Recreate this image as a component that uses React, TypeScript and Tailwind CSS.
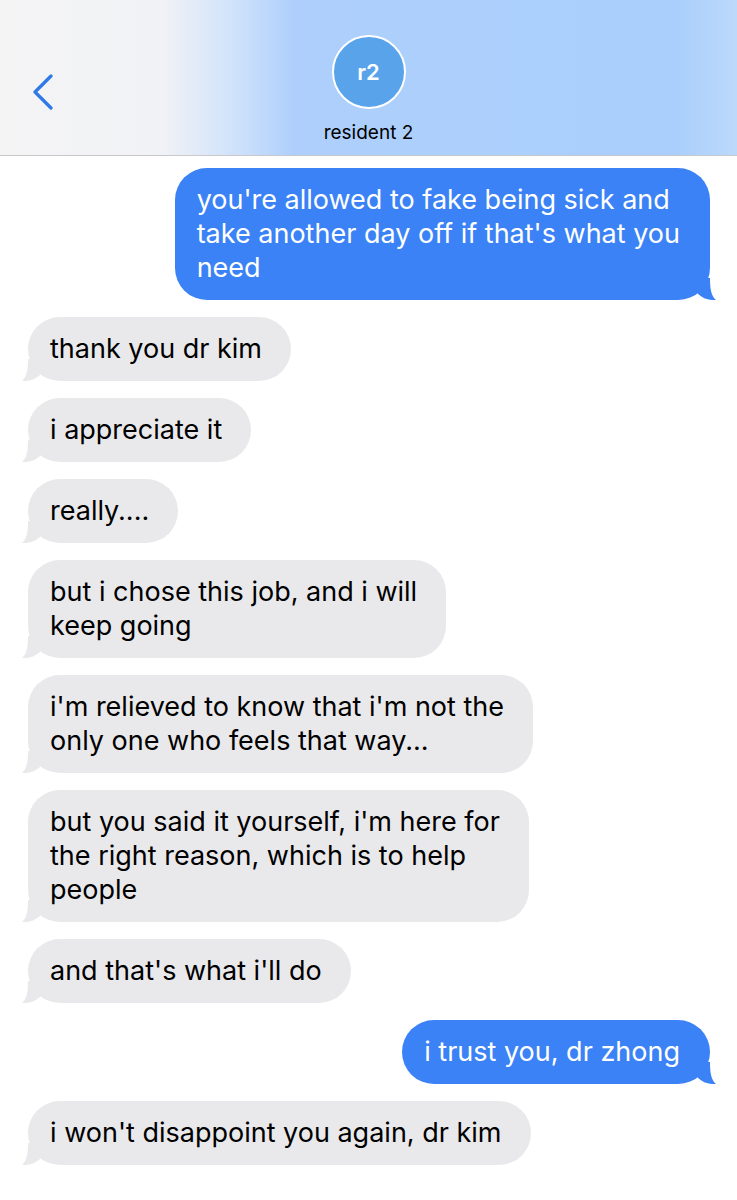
import { ReactNode } from 'react';

type Msg = { from: 'me' | 'them'; lines: string[] };

const messages: Msg[] = [
  { from: 'me', lines: ["you're allowed to fake being sick and", "take another day off if that's what you", 'need'] },
  { from: 'them', lines: ['thank you dr kim'] },
  { from: 'them', lines: ['i appreciate it'] },
  { from: 'them', lines: ['really....'] },
  { from: 'them', lines: ['but i chose this job, and i will', 'keep going'] },
  { from: 'them', lines: ["i'm relieved to know that i'm not the", 'only one who feels that way...'] },
  { from: 'them', lines: ["but you said it yourself, i'm here for", 'the right reason, which is to help', 'people'] },
  { from: 'them', lines: ["and that's what i'll do"] },
  { from: 'me', lines: ['i trust you, dr zhong'] },
  { from: 'them', lines: ["i won't disappoint you again, dr kim"] },
];

const Tail = ({ mine }: { mine: boolean }) => (
  <svg
    width="30"
    height="22"
    viewBox="0 0 30 22"
    className={
      mine
        ? 'absolute bottom-0 right-[-6px] scale-x-[-1]'
        : 'absolute bottom-0 left-[-6px]'
    }
  >
    <path
      d="M6 0 C6 12 4.5 18 0 22 C7 22.6 13 20.5 18 16 L30 0 Z"
      fill={mine ? '#3a82f6' : '#e9e9eb'}
    />
  </svg>
);

const Bubble = ({ msg }: { msg: Msg }) => {
  const mine = msg.from === 'me';
  const text: ReactNode[] = msg.lines.map((l, i) => <div key={i}>{l}</div>);
  return (
    <div className={mine ? 'flex justify-end pr-[27px]' : 'flex justify-start pl-[28px]'}>
      <div
        className={
          mine
            ? 'relative rounded-[32px] bg-[#3a82f6] text-white pl-[22px] pr-[30px] py-[15px] whitespace-nowrap'
            : 'relative rounded-[32px] bg-[#e9e9eb] text-black pl-[22px] pr-[29px] py-[15px] whitespace-nowrap'
        }
      >
        <Tail mine={mine} />
        <div className="relative text-[27px] leading-[34px]">{text}</div>
      </div>
    </div>
  );
};

const App = () => {
  return (
    <div
      className="w-[737px] h-[1200px] bg-white overflow-hidden"
      style={{ fontFamily: 'Inter, "Noto Sans", sans-serif' }}
    >
      <header className="relative h-[156px] border-b border-[#c9c9cc] bg-[linear-gradient(90deg,#f4f4f5_0%,#f1f2f5_22%,#cfe2fb_32%,#aecffc_40%,#aacffc_92%,#bcd9fb_100%)] flex flex-col items-center">
        <button className="absolute left-[30px] top-[74px]">
          <svg width="26" height="36" viewBox="0 0 26 36">
            <path d="M21 2 L5 18 L21 34" fill="none" stroke="#2f78e8" strokeWidth="3.2" strokeLinecap="round" strokeLinejoin="round" />
          </svg>
        </button>
        <div className="mt-[35px] w-[74px] h-[74px] rounded-full bg-[#58a3ea] border-2 border-white flex items-center justify-center">
          <span className="text-white text-[22px] font-semibold">r2</span>
        </div>
        <div className="mt-[10px] text-[19px] text-black">resident 2</div>
      </header>
      <main className="pt-[12px] flex flex-col gap-[17px]">
        {messages.map((m, i) => (
          <Bubble key={i} msg={m} />
        ))}
      </main>
    </div>
  );
};

export default App;
